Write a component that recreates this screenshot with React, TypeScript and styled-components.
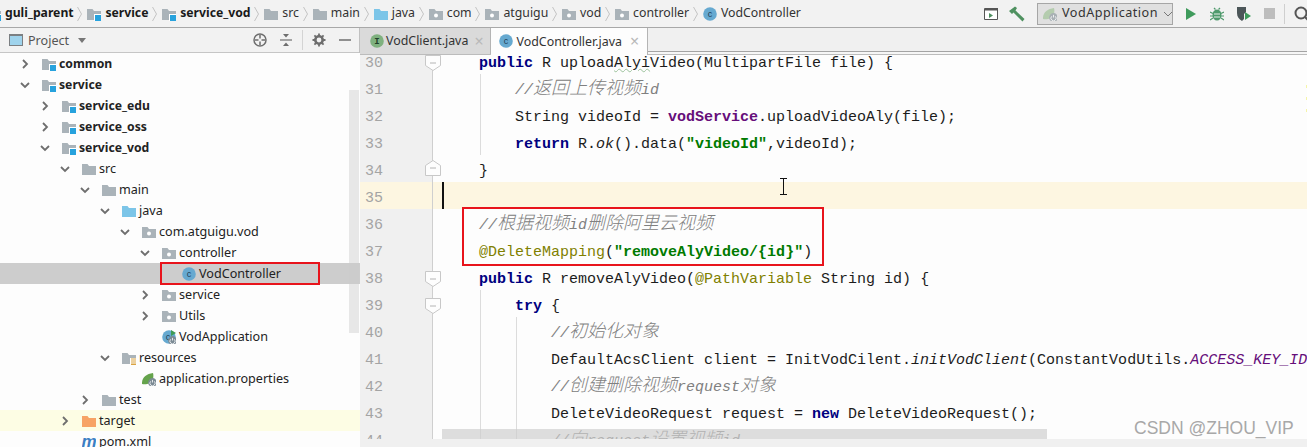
import React from 'react'
import styled, { createGlobalStyle } from 'styled-components'

type FolderKind = 'plain' | 'source' | 'module' | 'package' | 'resources' | 'target'

const FOLDER_FILL: Record<FolderKind, string> = {
  plain: '#aab3b9',
  source: '#7cc5e8',
  module: '#aab3b9',
  package: '#aab3b9',
  resources: '#aab3b9',
  target: '#f7a365'
}

function FolderIcon ({ kind }: { kind: FolderKind }): React.ReactElement {
  return (
    <IconSvg viewBox="0 0 14 14">
      <path d="M0 2h5.500l1.500 2h7v9H0z" fill={FOLDER_FILL[kind]} />
      {kind === 'module' && <path d="M7 7h7v7H7z" fill="#fff" />}
      {kind === 'module' && <path d="M8 8h6v6H8z" fill="#27a2dd" />}
      {kind === 'package' && <circle cx="7" cy="8.500" r="2" fill="#fff" />}
      {kind === 'resources' && <path d="M8 7h6v7H8z" fill="#fff" />}
      {kind === 'resources' && <path d="M9 8h5M9 10h5M9 12h5M9 13.500h5" stroke="#d9a343" strokeWidth="1" />}
    </IconSvg>
  )
}

function ClassIcon (): React.ReactElement {
  return (
    <IconSvg viewBox="0 0 14 14">
      <circle cx="7" cy="7" r="6.800" fill="#66a9d0" />
      <text x="7" y="10" textAnchor="middle" fontSize="9" fontFamily="Liberation Sans, sans-serif" fill="#1f3f55">c</text>
    </IconSvg>
  )
}

function InterfaceIcon (): React.ReactElement {
  return (
    <IconSvg viewBox="0 0 14 14">
      <circle cx="7" cy="7" r="6.800" fill="#7fb17f" />
      <text x="7" y="10" textAnchor="middle" fontSize="9" fontWeight="700" fontFamily="Liberation Mono, monospace" fill="#20402a">I</text>
    </IconSvg>
  )
}

function PowerBadge ({ cx, cy, fill = '#7b8a94' }: { cx: number, cy: number, fill?: string }): React.ReactElement {
  return (
    <g>
      <circle cx={cx} cy={cy} r="4.400" fill={fill} />
      <path d={`M${cx - 1.8} ${cy - 1.2}a2.600 2.600 0 1 0 3.600 0M${cx} ${cy - 2.6}v2.600`} fill="none" stroke="#fff" strokeWidth=".8" />
    </g>
  )
}

function SpringIcon (): React.ReactElement {
  return (
    <IconSvg viewBox="0 0 14 14">
      <path d="M0 12C-.5 6 4 2 11 1c1 4 0 8-3 10-3 1.500-6 1.500-8 1z" fill="#65a34c" />
      <PowerBadge cx={10.5} cy={10.5} />
    </IconSvg>
  )
}

function BootClassIcon (): React.ReactElement {
  return (
    <IconSvg viewBox="0 0 14 14">
      <circle cx="7" cy="7" r="6.800" fill="#66a9d0" />
      <text x="6" y="10" textAnchor="middle" fontSize="9" fontFamily="Liberation Sans, sans-serif" fill="#1f3f55">c</text>
      <path d="M9 0l5 3-5 3z" fill="#3f9b55" />
      <PowerBadge cx={10.5} cy={10.5} />
    </IconSvg>
  )
}

function PomIcon (): React.ReactElement {
  return (
    <IconSvg viewBox="0 0 14 14">
      <text x="7" y="12" textAnchor="middle" fontSize="17" fontStyle="italic" fontWeight="700" fontFamily="Liberation Sans, sans-serif" fill="#3b7fc4">m</text>
    </IconSvg>
  )
}

function Chevron ({ open }: { open: boolean }): React.ReactElement {
  return (
    <ChevronSvg viewBox="0 0 10 10">
      <path d={open ? 'M1 3l4 4 4-4' : 'M3 1l4 4-4 4'} fill="none" stroke="#6e6e6e" strokeWidth="1.800" />
    </ChevronSvg>
  )
}

interface TreeNode {
  label: string
  level: number
  open?: boolean
  bold?: boolean
  icon: React.ReactElement
  tone?: 'selected' | 'ignored'
}

const TREE: TreeNode[] = [
  { label: 'common', level: 0, open: false, bold: true, icon: <FolderIcon kind="module" /> },
  { label: 'service', level: 0, open: true, bold: true, icon: <FolderIcon kind="module" /> },
  { label: 'service_edu', level: 1, open: false, bold: true, icon: <FolderIcon kind="module" /> },
  { label: 'service_oss', level: 1, open: false, bold: true, icon: <FolderIcon kind="module" /> },
  { label: 'service_vod', level: 1, open: true, bold: true, icon: <FolderIcon kind="module" /> },
  { label: 'src', level: 2, open: true, icon: <FolderIcon kind="plain" /> },
  { label: 'main', level: 3, open: true, icon: <FolderIcon kind="plain" /> },
  { label: 'java', level: 4, open: true, icon: <FolderIcon kind="source" /> },
  { label: 'com.atguigu.vod', level: 5, open: true, icon: <FolderIcon kind="package" /> },
  { label: 'controller', level: 6, open: true, icon: <FolderIcon kind="package" /> },
  { label: 'VodController', level: 7, icon: <ClassIcon />, tone: 'selected' },
  { label: 'service', level: 6, open: false, icon: <FolderIcon kind="package" /> },
  { label: 'Utils', level: 6, open: false, icon: <FolderIcon kind="package" /> },
  { label: 'VodApplication', level: 6, icon: <BootClassIcon /> },
  { label: 'resources', level: 4, open: true, icon: <FolderIcon kind="resources" /> },
  { label: 'application.properties', level: 5, icon: <SpringIcon /> },
  { label: 'test', level: 3, open: false, icon: <FolderIcon kind="plain" /> },
  { label: 'target', level: 2, open: false, icon: <FolderIcon kind="target" />, tone: 'ignored' },
  { label: 'pom.xml', level: 2, icon: <PomIcon /> }
]

const CRUMBS: Array<{ label: string, bold?: boolean, icon: React.ReactElement }> = [
  { label: 'guli_parent', bold: true, icon: <FolderIcon kind="module" /> },
  { label: 'service', bold: true, icon: <FolderIcon kind="module" /> },
  { label: 'service_vod', bold: true, icon: <FolderIcon kind="module" /> },
  { label: 'src', icon: <FolderIcon kind="plain" /> },
  { label: 'main', icon: <FolderIcon kind="plain" /> },
  { label: 'java', icon: <FolderIcon kind="source" /> },
  { label: 'com', icon: <FolderIcon kind="package" /> },
  { label: 'atguigu', icon: <FolderIcon kind="package" /> },
  { label: 'vod', icon: <FolderIcon kind="package" /> },
  { label: 'controller', icon: <FolderIcon kind="package" /> },
  { label: 'VodController', icon: <ClassIcon /> }
]

interface CodeLine {
  no: number
  code?: React.ReactNode
  fold?: 'open' | 'close'
  guides?: number[]
  current?: boolean
}

function codeLines (): CodeLine[] {
  return [
    { no: 30, fold: 'open', code: <>    <Kw>public</Kw> R upload<Squiggle>Alyi</Squiggle>Video(MultipartFile file) {'{'}</> },
    { no: 31, guides: [37], code: <Cm>        //<Cn>返回上传视频</Cn>id</Cm> },
    { no: 32, guides: [37], code: <>        String videoId = <Field>vodService</Field>.uploadVideoAly(file);</> },
    { no: 33, guides: [37], code: <>        <Kw>return</Kw> R.<Stat>ok</Stat>().data(<Str>"videoId"</Str>,videoId);</> },
    { no: 34, fold: 'close', code: <>    {'}'}</> },
    { no: 35, current: true },
    { no: 36, code: <Cm>    //<Cn>根据视频</Cn>id<Cn>删除阿里云视频</Cn></Cm> },
    { no: 37, code: <>    <Ann>@DeleteMapping</Ann>(<Str>"removeAlyVideo/{'{'}id{'}'}"</Str>)</> },
    { no: 38, fold: 'open', code: <>    <Kw>public</Kw> R removeAlyVideo(<Ann>@PathVariable</Ann> String id) {'{'}</> },
    { no: 39, fold: 'open', guides: [37], code: <>        <Kw>try</Kw> {'{'}</> },
    { no: 40, guides: [37, 73], code: <Cm>            //<Cn>初始化对象</Cn></Cm> },
    { no: 41, guides: [37, 73], code: <>            DefaultAcsClient client = InitVodCilent.<Stat>initVodClient</Stat>(ConstantVodUtils.<StatField>ACCESS_KEY_ID</StatField>, ConstantVodUtils.ACCESS_KEY_SECRET);</> },
    { no: 42, guides: [37, 73], code: <Cm>            //<Cn>创建删除视频</Cn>request<Cn>对象</Cn></Cm> },
    { no: 43, guides: [37, 73], code: <>            DeleteVideoRequest request = <Kw>new</Kw> DeleteVideoRequest();</> },
    { no: 44, guides: [37, 73], code: <Cm>            //<Cn>向</Cn>request<Cn>设置视频</Cn>id</Cm> }
  ]
}

export default function App (): React.ReactElement {
  return (
    <Page>
      <GlobalStyle />
      <TopBar>
        <Crumbs>
          {CRUMBS.map((crumb, index) => (
            <React.Fragment key={crumb.label + index}>
              {index > 0 && <CrumbSep viewBox="0 0 5 16"><path d="M.5 1l4 7-4 7" fill="none" stroke="#c4c4c4" /></CrumbSep>}
              <Crumb $bold={crumb.bold}>{crumb.icon}<CrumbText>{crumb.label}</CrumbText></Crumb>
            </React.Fragment>
          ))}
        </Crumbs>
        <RunTools>
          <ToolIcon viewBox="0 0 14 14"><path d="M.5 1.500h13v11H.5z" fill="#fff" stroke="#555" /><path d="M1 1h13v2.500H1z" fill="#555" /><path d="M5 6l4 2.500L5 11z" fill="#4d8f5f" /></ToolIcon>
          <Hammer viewBox="0 0 16 16"><path d="M0 5L6 .5 8 2 6.500 4.500l9 8.500-2 2.500-9-9L3 8z" fill="#4f9160" /></Hammer>
          <RunConfig>
            <IconSvg viewBox="0 0 14 14">
              <path d="M0 12C-.5 6 4 2 11 1c1 4 0 8-3 10-3 1.500-6 1.500-8 1z" fill="#b4ccae" />
              <PowerBadge cx={10.5} cy={10.5} fill="#a8b0b4" />
            </IconSvg>
            <RunLabel>VodApplication</RunLabel>
            <ChevronSvg viewBox="0 0 10 10"><path d="M1 3l4 4 4-4" fill="none" stroke="#777" /></ChevronSvg>
          </RunConfig>
          <PlayIcon viewBox="0 0 12 14"><path d="M1 1l10 6-10 6z" fill="#3f9b5c" /></PlayIcon>
          <BugIcon viewBox="0 0 14 14">
            <ellipse cx="7" cy="8" rx="4.500" ry="5.500" fill="#4f9a6c" />
            <path d="M0 5l3 1.500M14 5l-3 1.500M0 9h3M14 9h-3M0 13l3-2M14 13l-3-2M4 1l1.500 1.500M10 1L8.500 2.500" stroke="#4f9a6c" strokeWidth="1.200" />
            <path d="M4 7h6M4 10h6" stroke="#e8efe9" />
          </BugIcon>
          <CoverIcon viewBox="0 0 16 16"><path d="M1 1h9v5L8 8v5l-2 2c-3-2-5-4-5-8z" fill="#4c5659" /><path d="M9 6l6 4-6 4z" fill="#3f9b5c" /></CoverIcon>
          <StopIcon />
          <ToolDivider />
          <SearchIcon viewBox="0 0 16 16"><circle cx="7" cy="7" r="5.500" fill="none" stroke="#555" strokeWidth="2" /><path d="M11 11l4 4" stroke="#555" strokeWidth="2" /></SearchIcon>
        </RunTools>
      </TopBar>
      <Workspace>
        <ProjectPane>
          <PaneHeader>
            <PaneIcon />
            <PaneTitle>Project</PaneTitle>
            <PaneCaret />
            <PaneTools>
              <PaneTool viewBox="0 0 14 14"><circle cx="7" cy="7" r="6" fill="none" stroke="#6e6e6e" strokeWidth="1.500" /><path d="M7 2v3.500M7 8.500V12M2 7h3.500M8.500 7H12" stroke="#6e6e6e" strokeWidth="1.500" /></PaneTool>
              <PaneTool viewBox="0 0 14 14"><path d="M1 7h12" stroke="#6e6e6e" strokeWidth="1.200" /><path d="M4 1h6L7 4.500zM4 13h6L7 9.500z" fill="#6e6e6e" /></PaneTool>
              <PaneDivider />
              <PaneTool viewBox="0 0 14 14"><circle cx="7" cy="7" r="3.700" fill="none" stroke="#6e6e6e" strokeWidth="2.600" /><path d="M7 .5v13M.5 7h13M2.400 2.400l9.200 9.200M11.600 2.400l-9.200 9.200" stroke="#6e6e6e" strokeWidth="1.800" strokeDasharray="2.500 8 2.500" /></PaneTool>
              <PaneTool viewBox="0 0 14 14"><path d="M1 7h12" stroke="#6e6e6e" strokeWidth="1.500" /></PaneTool>
            </PaneTools>
          </PaneHeader>
          <Tree>
            <TreeThumb />
            {TREE.map((node, index) => (
              <TreeRow key={node.label + index} $level={node.level} $tone={node.tone}>
                <ChevronSlot>{node.open !== undefined && <Chevron open={node.open} />}</ChevronSlot>
                {node.icon}
                <TreeLabel $bold={node.bold}>{node.label}</TreeLabel>
              </TreeRow>
            ))}
          </Tree>
        </ProjectPane>
        <EditorPane>
          <TabStrip>
            <Tab>
              <InterfaceIcon />
              <TabName>VodClient.java</TabName>
              <TabClose>×</TabClose>
            </Tab>
            <Tab $active>
              <ClassIcon />
              <TabName>VodController.java</TabName>
              <TabClose>×</TabClose>
            </Tab>
          </TabStrip>
          <Editor>
            <Lines>
              {codeLines().map((line) => (
                <Line key={line.no} $current={line.current}>
                  <LineNo $current={line.current}>{line.no}</LineNo>
                  {line.fold && (
                    <FoldMark viewBox="0 0 16 16" $close={line.fold === 'close'}>
                      <path d={line.fold === 'open' ? 'M.5.5h15v10L8 15.500.5 10.500z' : 'M.5 15.500h15v-10L8 .5.500 5.500z'} fill="#fdfdfd" stroke="#c8c8c8" />
                      <path d="M5 8h6" stroke="#b4b4b4" />
                    </FoldMark>
                  )}
                  {line.guides?.map((left) => <Guide key={left} $left={left} />)}
                  {line.current && <Caret />}
                  <Code>{line.code}</Code>
                </Line>
              ))}
            </Lines>
            <HScrollThumb />
            <ErrorStripe />
          </Editor>
          <StatusBar />
        </EditorPane>
      </Workspace>
      <TreeCallout />
      <CodeCallout />
      <TextCursor viewBox="0 0 9 17"><path d="M1 .5h7M4.500.5v16M1 16.500h7" fill="none" stroke="#111" /></TextCursor>
      <Watermark>CSDN @ZHOU_VIP</Watermark>
    </Page>
  )
}

const GlobalStyle = createGlobalStyle`
  html, body {
    margin: 0;
    height: 100%;
    overflow: hidden;
    background: #fdfdfd;
  }
`
const Page = styled.div`
  position: relative;
  display: flex;
  flex-direction: column;
  width: 1307px;
  height: 447px;
  overflow: hidden;
  font-family: "Noto Sans", "Liberation Sans", sans-serif;
  font-size: 12.6px;
  color: #222;
`
const IconSvg = styled.svg`
  flex: none;
  width: 14px;
  height: 14px;
  overflow: hidden;
`
const ChevronSvg = styled.svg`
  flex: none;
  width: 10px;
  height: 10px;
`
const TopBar = styled.div`
  flex: none;
  display: flex;
  align-items: center;
  height: 27px;
  background: #f2f2f2;
  border-bottom: 1px solid #a8a8a8;
  overflow: hidden;
`
const Crumbs = styled.div`
  display: flex;
  align-items: center;
  margin-left: -13px;
`
const Crumb = styled.div<{ $bold?: boolean }>`
  display: flex;
  align-items: center;
  gap: 4px;
  font-size: ${(p) => (p.$bold ? '12.2px' : '12.3px')};
  font-weight: ${(p) => (p.$bold ? 700 : 400)};
  color: ${(p) => (p.$bold ? '#1a1a1a' : '#333')};
  white-space: nowrap;
`
const CrumbText = styled.span`
  margin-top: -2px;
`
const CrumbSep = styled.svg`
  flex: none;
  width: 5px;
  height: 16px;
  margin: 0 5px 0 3.800px;
`
const RunTools = styled.div`
  display: flex;
  align-items: center;
  margin-left: auto;
  margin-right: -3px;
`
const ToolIcon = styled.svg`
  width: 14px;
  height: 14px;
`
const Hammer = styled.svg`
  width: 16px;
  height: 16px;
  margin-left: 11px;
`
const RunConfig = styled.div`
  display: flex;
  align-items: center;
  box-sizing: border-box;
  width: 136px;
  height: 22px;
  margin-left: 12px;
  padding: 0 5px;
  gap: 5px;
  background: #e0e0e0;
  border: 1px solid #a6a6a6;
`
const RunLabel = styled.span`
  flex: 1;
  margin-top: -2px;
  color: #333;
  letter-spacing: .5px;
`
const PlayIcon = styled.svg`
  width: 12px;
  height: 14px;
  margin-left: 12px;
`
const BugIcon = styled.svg`
  width: 14px;
  height: 14px;
  margin-left: 13px;
`
const CoverIcon = styled.svg`
  width: 16px;
  height: 16px;
  margin-left: 12px;
`
const StopIcon = styled.div`
  width: 11px;
  height: 11px;
  margin-left: 12px;
  background: #bdbdbd;
`
const ToolDivider = styled.div`
  width: 1px;
  height: 20px;
  margin: 0 9px;
  background: #cfcfcf;
`
const SearchIcon = styled.svg`
  width: 16px;
  height: 16px;
`
const Workspace = styled.div`
  flex: 1;
  display: flex;
  min-height: 0;
`
const ProjectPane = styled.div`
  flex: none;
  display: flex;
  flex-direction: column;
  width: 360px;
`
const PaneHeader = styled.div`
  flex: none;
  display: flex;
  align-items: center;
  box-sizing: border-box;
  height: 25px;
  padding-left: 9px;
  background: #f2f2f2;
  border-bottom: 1px solid #c6c6c6;
`
const PaneIcon = styled.div`
  box-sizing: border-box;
  width: 14px;
  height: 12px;
  background: #9fd3ec;
  border: 1.5px solid #7b7f82;
  border-top-width: 2px;
`
const PaneTitle = styled.span`
  margin: 0 0 0 5px;
  color: #555;
`
const PaneCaret = styled.div`
  width: 0;
  height: 0;
  margin-left: 9px;
  border-style: solid;
  border-width: 5px 4px 0;
  border-color: #777 transparent transparent;
`
const PaneTools = styled.div`
  display: flex;
  align-items: center;
  margin-left: auto;
  margin-right: 8px;
  gap: 12px;
`
const PaneTool = styled.svg`
  width: 14px;
  height: 14px;
`
const PaneDivider = styled.div`
  width: 1px;
  height: 20px;
  margin: 0 -3px;
  background: #d4d4d4;
`
const Tree = styled.div`
  position: relative;
  flex: 1;
  overflow: hidden;
  background: #fdfdfd;
`
const TreeThumb = styled.div`
  position: absolute;
  top: 37px;
  right: 1px;
  width: 10px;
  height: 243px;
  background: rgba(205, 205, 205, .45);
`
const TreeRow = styled.div<{ $level: number, $tone?: 'selected' | 'ignored' }>`
  display: flex;
  align-items: center;
  box-sizing: border-box;
  height: 21px;
  padding-left: ${(p) => 18 + p.$level * 20}px;
  background: ${(p) => (p.$tone === 'selected' ? '#cdcdcd' : p.$tone === 'ignored' ? '#fdfde4' : 'transparent')};
`
const ChevronSlot = styled.div`
  flex: none;
  display: flex;
  align-items: center;
  width: 24px;
  padding-left: 2px;
  box-sizing: border-box;
`
const TreeLabel = styled.span<{ $bold?: boolean }>`
  margin: -1px 0 0 3px;
  font-size: ${(p) => (p.$bold ? '12.2px' : '12.6px')};
  font-weight: ${(p) => (p.$bold ? 700 : 400)};
  color: #222;
  white-space: nowrap;
`
const EditorPane = styled.div`
  flex: 1;
  min-width: 0;
  display: flex;
  flex-direction: column;
  border-left: 1px solid #c0c0c0;
  margin-left: -1px;
`
const TabStrip = styled.div`
  flex: none;
  display: flex;
  box-sizing: border-box;
  height: 27px;
  background: linear-gradient(to bottom, #f0f0f0 23px, #a4a4a4 23px, #a4a4a4 24px, #f6f6f6 24px);
  border-bottom: 1px solid #bcbcbc;
`
const Tab = styled.div<{ $active?: boolean }>`
  display: flex;
  align-items: center;
  box-sizing: border-box;
  height: ${(p) => (p.$active ? '27px' : '26px')};
  padding: 0 ${(p) => (p.$active ? '8px 1px 8px' : '6px 1px 10px')};
  gap: ${(p) => (p.$active ? '4px' : '2px')};
  background: ${(p) => (p.$active ? '#fdfdfd' : '#dadada')};
  border-right: 1px solid #b4b4b4;
  color: #333;
`
const TabName = styled.span`
  font-size: 12.4px;
  white-space: nowrap;
`
const TabClose = styled.span`
  margin-left: 4px;
  font-size: 16px;
  line-height: 16px;
  color: #b8b8b8;
`
const Editor = styled.div`
  position: relative;
  flex: 1;
  min-height: 0;
  overflow: hidden;
  background: #fdfdfd;
`
const Lines = styled.div`
  margin-top: -8px;
`
const Line = styled.div<{ $current?: boolean }>`
  position: relative;
  display: flex;
  height: 27px;
  background: ${(p) => (p.$current ? '#fdf6e1' : 'transparent')};
`
const LineNo = styled.div<{ $current?: boolean }>`
  flex: none;
  box-sizing: border-box;
  width: 83px;
  padding: 6px 0 0 5px;
  background: linear-gradient(to right, ${(p) => (p.$current ? '#fdf6e1' : '#f0f0f0')} 72px, #cfcfcf 72px, #cfcfcf 73px, transparent 73px);
  font-family: "Liberation Mono", monospace;
  font-size: 15px;
  line-height: 21px;
  color: #a4a4a4;
`
const FoldMark = styled.svg<{ $close: boolean }>`
  position: absolute;
  left: 65px;
  top: ${(p) => (p.$close ? '5px' : '8px')};
  width: 16px;
  height: 16px;
`
const Guide = styled.div<{ $left: number }>`
  position: absolute;
  left: ${(p) => p.$left + 83}px;
  top: 0;
  bottom: 0;
  width: 1px;
  background: #dcdcdc;
`
const Caret = styled.div`
  position: absolute;
  left: 82px;
  top: 0;
  bottom: 0;
  width: 2px;
  background: #111;
`
const Code = styled.div`
  padding-top: 6px;
  white-space: pre;
  font-family: "Liberation Mono", monospace;
  font-size: 15px;
  line-height: 21px;
  color: #1c1c1c;
`
const Kw = styled.span`
  color: #000080;
  font-weight: 700;
`
const Str = styled.span`
  color: #007a00;
  font-weight: 700;
`
const Ann = styled.span`
  color: #808000;
`
const Field = styled.span`
  color: #660e7a;
  font-weight: 700;
`
const Stat = styled.span`
  font-style: italic;
`
const StatField = styled.span`
  color: #660e7a;
  font-style: italic;
`
const Cm = styled.span`
  color: #808080;
  font-style: italic;
`
const Cn = styled.span`
  font-family: "Noto Sans CJK SC", sans-serif;
  font-size: 18px;
  font-weight: 300;
  line-height: 0;
`
const Squiggle = styled.span`
  text-decoration: underline wavy #9cc29c 1px;
`
const HScrollThumb = styled.div`
  position: absolute;
  left: 82px;
  bottom: 0;
  width: 605px;
  height: 10px;
  background: rgba(205, 205, 205, .65);
`
const ErrorStripe = styled.div`
  position: absolute;
  right: 0;
  top: 30px;
  width: 1px;
  height: 30px;
  background: repeating-linear-gradient(to bottom, #f5f5a8 0 3px, transparent 3px 12px);
`
const StatusBar = styled.div`
  flex: none;
  height: 8px;
  background: #f0f0f0;
`
const TreeCallout = styled.div`
  position: absolute;
  left: 160px;
  top: 262px;
  box-sizing: border-box;
  width: 160px;
  height: 23px;
  border: 2px solid #e8141c;
`
const CodeCallout = styled.div`
  position: absolute;
  left: 462px;
  top: 207px;
  box-sizing: border-box;
  width: 362px;
  height: 59px;
  border: 2px solid #e8141c;
`
const TextCursor = styled.svg`
  position: absolute;
  left: 779px;
  top: 178px;
  width: 9px;
  height: 17px;
`
const Watermark = styled.div`
  position: absolute;
  left: 1134px;
  top: 417px;
  font-family: "Liberation Sans", sans-serif;
  font-size: 17.5px;
  line-height: 22px;
  color: #a8a8a8;
  white-space: nowrap;
`
